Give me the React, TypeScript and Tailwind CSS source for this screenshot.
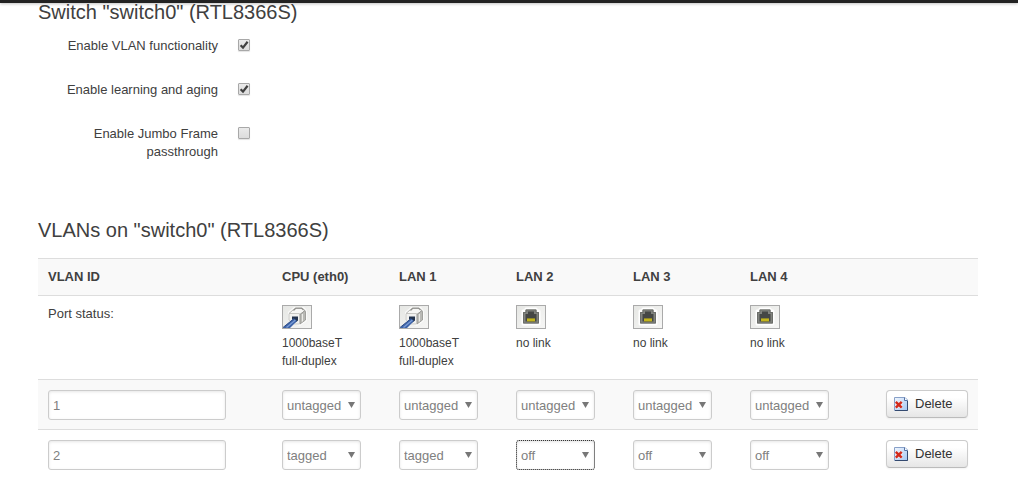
import { useState } from "react";
import clsx from "clsx";

type PortMode = "untagged" | "tagged" | "off";

interface Port {
  name: string;
  link: string[] | null;
}

interface Vlan {
  id: string;
  modes: PortMode[];
}

const ports: Port[] = [
  { name: "CPU (eth0)", link: ["1000baseT", "full-duplex"] },
  { name: "LAN 1", link: ["1000baseT", "full-duplex"] },
  { name: "LAN 2", link: null },
  { name: "LAN 3", link: null },
  { name: "LAN 4", link: null },
];

const initialVlans: Vlan[] = [
  { id: "1", modes: ["untagged", "untagged", "untagged", "untagged", "untagged"] },
  { id: "2", modes: ["tagged", "tagged", "off", "off", "off"] },
];

function PortUpIcon() {
  return (
    <svg width="28" height="22" viewBox="0 0 28 22" className="block">
      <path d="M5 6 L11 1 H21 L24 4.5 V15 L17 20 L6 17 Z" fill="#fff" opacity="0.7" />
      <path d="M6 7.5 L10.5 3.5 L12.5 2 H19 L22 4.5 L17 8.5 Z" fill="#f7f7f5" stroke="#a6a6a2" strokeWidth="0.8" />
      <path d="M10.5 4.5 L13 2.2 H18.5 L20.5 4" fill="none" stroke="#8b8b87" strokeWidth="1.1" />
      <path d="M17 8.5 L22 4.5 L22.5 6 V14 L17 18 Z" fill="#b9b9b5" stroke="#92928e" strokeWidth="0.8" />
      <path d="M19.4 8 V15.5" stroke="#f1f1ee" strokeWidth="1" />
      <path d="M6 8 Q6 7.5 7 7.5 H16.5 V18 H11 L6 14 Z" fill="#f1f1ef" stroke="#c0c0bc" strokeWidth="0.8" />
      <path d="M9 10.5 H15 V14.5 L12.5 16.5 L9 13 Z" fill="#24344e" />
      <path d="M0 21.8 L11 12.5 L14 15 L7 22 H0 Z" fill="#3c62a8" />
      <path d="M0 21.5 L11 12.6" stroke="#2b4a86" strokeWidth="1" />
      <path d="M3.5 21.5 L12.4 14" stroke="#7b9cd4" strokeWidth="1.3" />
    </svg>
  );
}

function PortDownIcon() {
  return (
    <svg width="28" height="22" viewBox="0 0 28 22" className="block">
      <path d="M6 5 H9 V3 H19 V5 H22 V18 H6 Z" fill="#fff" stroke="#fff" strokeWidth="3" strokeLinejoin="round" />
      <path d="M6 6 H8.5 V3.5 H19.5 V6 H22 V17.5 H6 Z" fill="#82847f" />
      <path d="M6.5 6.5 H9 V4 H19 V6.5 H21.5 V17 H6.5 Z" fill="none" stroke="#6b6d69" />
      <path d="M8.5 8 H11 V5.5 H17 V8 H19.5 V15.5 H8.5 Z" fill="#454745" />
      <path d="M10 12.5 H18 V15.5 H10 Z" fill="#aa9c10" />
      <path d="M11 12.5 V15 M13 12.5 V15 M15 12.5 V15 M17 12.5 V15" stroke="#e2d52c" strokeWidth="0.9" />
    </svg>
  );
}

function DeleteIcon() {
  return (
    <svg width="16" height="16" viewBox="0 0 16 16" className="block shrink-0">
      <defs>
        <linearGradient id="page" x1="0" y1="0" x2="1" y2="1">
          <stop offset="0" stopColor="#f2f7fe" />
          <stop offset="1" stopColor="#a3c6f3" />
        </linearGradient>
      </defs>
      <path d="M1.5 1.5 H12 L14.5 4 V14.5 H1.5 Z" fill="url(#page)" stroke="#88a0c8" />
      <path d="M11.5 1.5 V4.5 H14.5" fill="#fff" stroke="#5673a5" />
      <path d="M14.5 5 V14.5 H2" fill="none" stroke="#33496f" />
      <path d="M2.8 5.8 L8.7 11.7 M8.7 5.8 L2.8 11.7" stroke="#fff" strokeWidth="3.8" opacity="0.6" />
      <path d="M2.8 5.8 L8.7 11.7 M8.7 5.8 L2.8 11.7" stroke="#d32a1c" strokeWidth="2.5" />
    </svg>
  );
}

function Option({ id, label, defaultChecked }: { id: string; label: string; defaultChecked?: boolean }) {
  return (
    <div className="flex items-start gap-5">
      <label htmlFor={id} className="w-[180px] text-right">
        {label}
      </label>
      <span className="relative mt-0.5 block size-3">
        <input
          id={id}
          type="checkbox"
          defaultChecked={defaultChecked}
          className="peer block size-3 appearance-none rounded-[1px] border border-[#a8a8a8] bg-linear-to-b from-[#eaeaea] to-[#dcdcdc] shadow-[0_1px_1px_#e4e4e4]"
        />
        <svg viewBox="0 0 12 12" className="pointer-events-none absolute inset-0 hidden size-3 peer-checked:block">
          <path d="M2.6 6.2 L5 8.6 L9.6 2.8" fill="none" stroke="#404040" strokeWidth="2.2" />
        </svg>
      </span>
    </div>
  );
}

function PortSelect({ label, value, focused }: { label: string; value: PortMode; focused?: boolean }) {
  return (
    <div className="relative w-[79px]">
      <select
        aria-label={label}
        defaultValue={value}
        className={clsx(
          "block h-[30px] w-full appearance-none rounded-[3px] border border-[#ccc] bg-white pt-0.5 pl-1 text-[13px] leading-[18px] text-[#808080] shadow-[inset_0_1px_3px_rgba(0,0,0,0.1)]",
          focused && "outline-1 -outline-offset-1 outline-dotted outline-[#333]"
        )}
      >
        <option value="untagged">untagged</option>
        <option value="tagged">tagged</option>
        <option value="off">off</option>
      </select>
      <svg width="7" height="6" viewBox="0 0 7 6" className="pointer-events-none absolute top-3 right-1.5">
        <path d="M0 0 H7 L3.5 6 Z" fill="#777" />
      </svg>
    </div>
  );
}

export default function App() {
  const [vlans, setVlans] = useState(initialVlans);

  return (
    <div className="relative overflow-hidden bg-white font-['Liberation_Sans',Arial,sans-serif] text-[13px] leading-[18px] text-[#404040]">
      <div className="absolute inset-x-0 top-0 h-[3px] bg-[#222] shadow-[0_1px_3px_rgba(0,0,0,0.25)]" />

      <main className="pr-10 pb-2 pl-[38px]">
        <section>
          <h2 className="text-[20px] leading-6">Switch "switch0" (RTL8366S)</h2>
          <div className="mt-[13px] flex flex-col gap-[26px]">
            <Option id="enable_vlan" label="Enable VLAN functionality" defaultChecked />
            <Option id="enable_learning" label="Enable learning and aging" defaultChecked />
            <Option id="enable_jumbo" label="Enable Jumbo Frame passthrough" />
          </div>
        </section>

        <section className="mt-[51px]">
          <h2 className="text-[20px] leading-9">VLANs on "switch0" (RTL8366S)</h2>
          <table className="mt-2.5 w-full table-fixed border-separate border-spacing-0 text-left">
            <colgroup>
              <col />
              <col className="w-[117px]" />
              <col className="w-[117px]" />
              <col className="w-[117px]" />
              <col className="w-[117px]" />
              <col className="w-[136px]" />
              <col className="w-[102px]" />
            </colgroup>
            <thead>
              <tr className="bg-[#f9f9f9]">
                <th className="border-t border-[#ddd] px-2.5 py-[9px]">VLAN ID</th>
                {ports.map((port) => (
                  <th key={port.name} className="border-t border-[#ddd] px-2.5 py-[9px]">
                    {port.name}
                  </th>
                ))}
                <th className="border-t border-[#ddd]" />
              </tr>
            </thead>
            <tbody>
              <tr className="align-top">
                <td className="border-t border-[#ddd] px-2.5 py-[9px]">Port status:</td>
                {ports.map((port) => (
                  <td key={port.name} className="border-t border-[#ddd] px-2.5 py-[9px] text-[12px]">
                    <div className="mb-[5px] h-6 w-[30px] border border-[#aaa] bg-linear-to-br from-[#e6e7e4] to-[#f6f6f5]">
                      {port.link ? <PortUpIcon /> : <PortDownIcon />}
                    </div>
                    {port.link ? port.link.map((line) => <div key={line}>{line}</div>) : "no link"}
                  </td>
                ))}
                <td className="border-t border-[#ddd]" />
              </tr>
              {vlans.map((vlan) => (
                <tr key={vlan.id} className="align-top odd:bg-white even:bg-[#f9f9f9]">
                  <td className="border-t border-[#ddd] px-2.5 pt-2.5 pb-[9px]">
                    <input
                      type="text"
                      aria-label="VLAN ID"
                      defaultValue={vlan.id}
                      className="block h-[30px] w-[178px] rounded-[3px] border border-[#ccc] bg-white px-1 text-[#808080] shadow-[inset_0_1px_3px_rgba(0,0,0,0.1)]"
                    />
                  </td>
                  {vlan.modes.map((mode, i) => (
                    <td key={ports[i].name} className="border-t border-[#ddd] px-2.5 pt-2.5 pb-[9px]">
                      <PortSelect
                        label={`${ports[i].name}, VLAN ${vlan.id}`}
                        value={mode}
                        focused={vlan.id === "2" && i === 2}
                      />
                    </td>
                  ))}
                  <td className="border-t border-[#ddd] px-2.5 pt-2.5 pb-[9px]">
                    <button
                      type="button"
                      onClick={() => setVlans(vlans.filter((v) => v.id !== vlan.id))}
                      className="flex h-7 w-full items-center gap-1.5 rounded-[4px] border border-[#ccc] border-b-[#bbb] bg-linear-to-b from-white from-25% to-[#e6e6e6] pl-1.5 text-[#333] shadow-[0_1px_2px_rgba(0,0,0,0.05)]"
                    >
                      <DeleteIcon />
                      Delete
                    </button>
                  </td>
                </tr>
              ))}
            </tbody>
          </table>
        </section>
      </main>
    </div>
  );
}
